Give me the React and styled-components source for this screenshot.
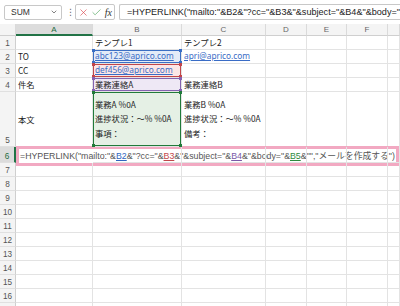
import React from 'react';
import styled, { createGlobalStyle } from 'styled-components';
import { X, Check, ChevronDown } from 'lucide-react';

const GlobalStyle = createGlobalStyle`
  html, body {
    margin: 0;
    padding: 0;
    background: #ffffff;
    overflow: hidden;
  }
  body {
    font-family: "Noto Sans CJK JP", "Noto Sans", sans-serif;
    color: #222;
  }
`;

const COLS = '16px 77px 89px 84px 41px 40px 41px 12px';

const REF = {
  blue: { line: '#3b6fc4', bg: '#e3ebf7', text: '#2f66c0' },
  red: { line: '#c2464a', bg: '#fbe6e6', text: '#c2464a' },
  purple: { line: '#8463b0', bg: '#eee8f5', text: '#7a5aa8' },
  green: { line: '#217a3a', bg: '#e5f0e5', text: '#2e8a3e' },
};

const Page = styled.div`
  width: 400px;
  height: 306px;
  overflow: hidden;
  display: flex;
  flex-direction: column;
`;

const Toolbar = styled.div`
  height: 24px;
  display: flex;
  align-items: center;
  gap: 4px;
  padding-left: 4px;
  flex-shrink: 0;
`;

const NameBox = styled.div`
  width: 58px;
  height: 15px;
  border: 1px solid #c8c8c8;
  border-radius: 2px;
  display: flex;
  align-items: center;
  justify-content: space-between;
  padding: 0 3px 0 6px;
  box-sizing: border-box;
  font-family: "Liberation Sans", sans-serif;
  font-size: 8.5px;
  color: #333;
`;

const Dots = styled.span`
  width: 5px;
  text-align: center;
  font-family: "DejaVu Sans", sans-serif;
  font-size: 9px;
  color: #666;
`;

const ActionBox = styled.div`
  width: 40px;
  height: 16px;
  border: 1px solid #c8c8c8;
  border-radius: 2px;
  display: flex;
  align-items: center;
  justify-content: space-around;
  box-sizing: border-box;
  padding: 0 1px;
`;

const Fx = styled.span`
  font-family: "Liberation Serif", serif;
  font-style: italic;
  font-size: 10px;
  color: #333;
`;

const FormulaInput = styled.div`
  flex: 1;
  min-width: 0;
  height: 16px;
  border: 1px solid #c8c8c8;
  border-right: none;
  border-radius: 2px 0 0 2px;
  display: flex;
  align-items: center;
  padding-left: 7px;
  box-sizing: border-box;
  white-space: nowrap;
  overflow: hidden;
  font-family: "Liberation Sans", sans-serif;
  font-size: 9.1px;
  color: #222;
`;

const Row = styled.div`
  display: grid;
  grid-template-columns: ${COLS};
  height: ${p => p.$h}px;
  flex-shrink: 0;
`;

const ColHead = styled.div`
  background: ${p => (p.$active ? '#dcdcdc' : '#f4f4f4')};
  border-right: 1px solid #dadada;
  border-bottom: ${p => (p.$active ? '2px solid #217346' : '1px solid #cfcfcf')};
  box-sizing: border-box;
  display: flex;
  align-items: center;
  justify-content: center;
  font-family: "Liberation Sans", sans-serif;
  font-size: 8px;
  color: ${p => (p.$active ? '#1d6b3d' : '#666')};
`;

const RowHead = styled.div`
  background: ${p => (p.$active ? '#dcdcdc' : '#f4f4f4')};
  border-right: ${p => (p.$active ? '2px solid #217346' : '1px solid #cfcfcf')};
  border-bottom: 1px solid #e0e0e0;
  box-sizing: border-box;
  display: flex;
  align-items: flex-end;
  justify-content: center;
  padding-bottom: 1px;
  font-family: "Liberation Sans", sans-serif;
  font-size: 8.2px;
  color: ${p => (p.$active ? '#1d6b3d' : '#555')};
`;

const Cell = styled.div`
  position: relative;
  border-right: 1px solid #e3e3e3;
  border-bottom: 1px solid #e3e3e3;
  box-sizing: border-box;
  display: flex;
  flex-direction: column;
  justify-content: ${p => (p.$top ? 'center' : 'flex-end')};
  padding: 0 2px 1px;
  font-size: 8.3px;
  line-height: 12px;
  white-space: nowrap;
  overflow: visible;
  background: ${p => (p.$ref ? REF[p.$ref].bg : 'transparent')};
  box-shadow: ${p => (p.$ref ? `inset 0 0 0 1px ${REF[p.$ref].line}` : 'none')};
  z-index: ${p => (p.$ref ? 1 : 0)};
`;

const Lines = styled.div`
  display: flex;
  flex-direction: column;
  line-height: 14.5px;
`;

const Handle = styled.span`
  position: absolute;
  width: 3px;
  height: 3px;
  background: ${p => REF[p.$ref].line};
  ${p => (p.$y === 't' ? 'top: -1px;' : 'bottom: -1px;')}
  ${p => (p.$x === 'l' ? 'left: -1px;' : 'right: -1px;')}
`;

const MailLink = styled.span`
  color: #3a6cc6;
  text-decoration: underline;
  font-family: "Noto Sans", sans-serif;
  font-size: 8.3px;
`;

const Editor = styled.div`
  position: absolute;
  left: 0;
  top: -1px;
  width: 383px;
  height: 20px;
  border: 3px solid #f2a9c2;
  box-sizing: border-box;
  background: #fff;
  display: flex;
  align-items: center;
  padding-left: 1px;
  white-space: nowrap;
  overflow: hidden;
  font-family: "Liberation Sans", "Noto Sans CJK JP", sans-serif;
  font-size: 8.8px;
  color: #555;
  z-index: 3;
`;

const ActiveMark = styled.span`
  position: absolute;
  left: -3px;
  bottom: -1px;
  width: 77px;
  height: 1px;
  background: #217346;
`;

const Ref = styled.span`
  color: ${p => REF[p.$c].text};
  text-decoration: underline;
`;

const Corners = ({ $ref }) => (
  <>
    <Handle $ref={$ref} $x="l" $y="t" />
    <Handle $ref={$ref} $x="r" $y="t" />
    <Handle $ref={$ref} $x="l" $y="b" />
    <Handle $ref={$ref} $x="r" $y="b" />
  </>
);

const Formula = () => (
  <>
    =HYPERLINK("mailto:"&<Ref $c="blue">B2</Ref>&"?cc="&<Ref $c="red">B3</Ref>&"&subject="&
    <Ref $c="purple">B4</Ref>&"&body="&<Ref $c="green">B5</Ref>&"","メールを作成する")
  </>
);

const Empty = () => (
  <>
    <Cell />
    <Cell />
    <Cell />
    <Cell />
    <Cell />
    <Cell />
    <Cell />
  </>
);

export default function App() {
  const letters = ['A', 'B', 'C', 'D', 'E', 'F', ''];
  const emptyRows = [7, 8, 9, 10, 11, 12, 13, 14, 15, 16];

  return (
    <Page>
      <GlobalStyle />
      <Toolbar>
        <NameBox>
          SUM
          <ChevronDown size={8} strokeWidth={2} color="#444" />
        </NameBox>
        <Dots>⋮</Dots>
        <ActionBox>
          <X size={11} strokeWidth={1.4} color="#d9454b" />
          <Check size={11} strokeWidth={1.4} color="#4aa357" />
          <Fx>fx</Fx>
        </ActionBox>
        <FormulaInput>
          =HYPERLINK("mailto:"&B2&"?cc="&B3&"&subject="&B4&"&body="&B5&"","メールを作成する")
        </FormulaInput>
      </Toolbar>

      <Row $h={12}>
        <ColHead />
        {letters.map((l, i) => (
          <ColHead key={i} $active={l === 'A'}>
            {l}
          </ColHead>
        ))}
      </Row>

      <Row $h={14}>
        <RowHead>1</RowHead>
        <Cell />
        <Cell>テンプレ1</Cell>
        <Cell>テンプレ2</Cell>
        <Cell />
        <Cell />
        <Cell />
        <Cell />
      </Row>

      <Row $h={14}>
        <RowHead>2</RowHead>
        <Cell>TO</Cell>
        <Cell $ref="blue">
          <MailLink>abc123@aprico.com</MailLink>
          <Corners $ref="blue" />
        </Cell>
        <Cell>
          <MailLink>apri@aprico.com</MailLink>
        </Cell>
        <Cell />
        <Cell />
        <Cell />
        <Cell />
      </Row>

      <Row $h={14}>
        <RowHead>3</RowHead>
        <Cell>CC</Cell>
        <Cell $ref="red">
          <MailLink>def456@aprico.com</MailLink>
          <Corners $ref="red" />
        </Cell>
        <Cell />
        <Cell />
        <Cell />
        <Cell />
        <Cell />
      </Row>

      <Row $h={14}>
        <RowHead>4</RowHead>
        <Cell>件名</Cell>
        <Cell $ref="purple">
          業務連絡A
          <Corners $ref="purple" />
        </Cell>
        <Cell>業務連絡B</Cell>
        <Cell />
        <Cell />
        <Cell />
        <Cell />
      </Row>

      <Row $h={55}>
        <RowHead>5</RowHead>
        <Cell $top>本文</Cell>
        <Cell $top $ref="green">
          <Lines>
            <span>業務A %0A</span>
            <span>進捗状況：～% %0A</span>
            <span>事項：</span>
          </Lines>
          <Corners $ref="green" />
        </Cell>
        <Cell $top>
          <Lines>
            <span>業務B %0A</span>
            <span>進捗状況：～% %0A</span>
            <span>備考：</span>
          </Lines>
        </Cell>
        <Cell />
        <Cell />
        <Cell />
        <Cell />
      </Row>

      <Row $h={16}>
        <RowHead $active>6</RowHead>
        <Cell>
          <Editor>
            <Formula />
            <ActiveMark />
          </Editor>
        </Cell>
        <Cell />
        <Cell />
        <Cell />
        <Cell />
        <Cell />
        <Cell />
      </Row>

      {emptyRows.map(n => (
        <Row key={n} $h={14}>
          <RowHead>{n}</RowHead>
          <Empty />
        </Row>
      ))}
      <Row $h={14}>
        <RowHead />
        <Empty />
      </Row>
    </Page>
  );
}
